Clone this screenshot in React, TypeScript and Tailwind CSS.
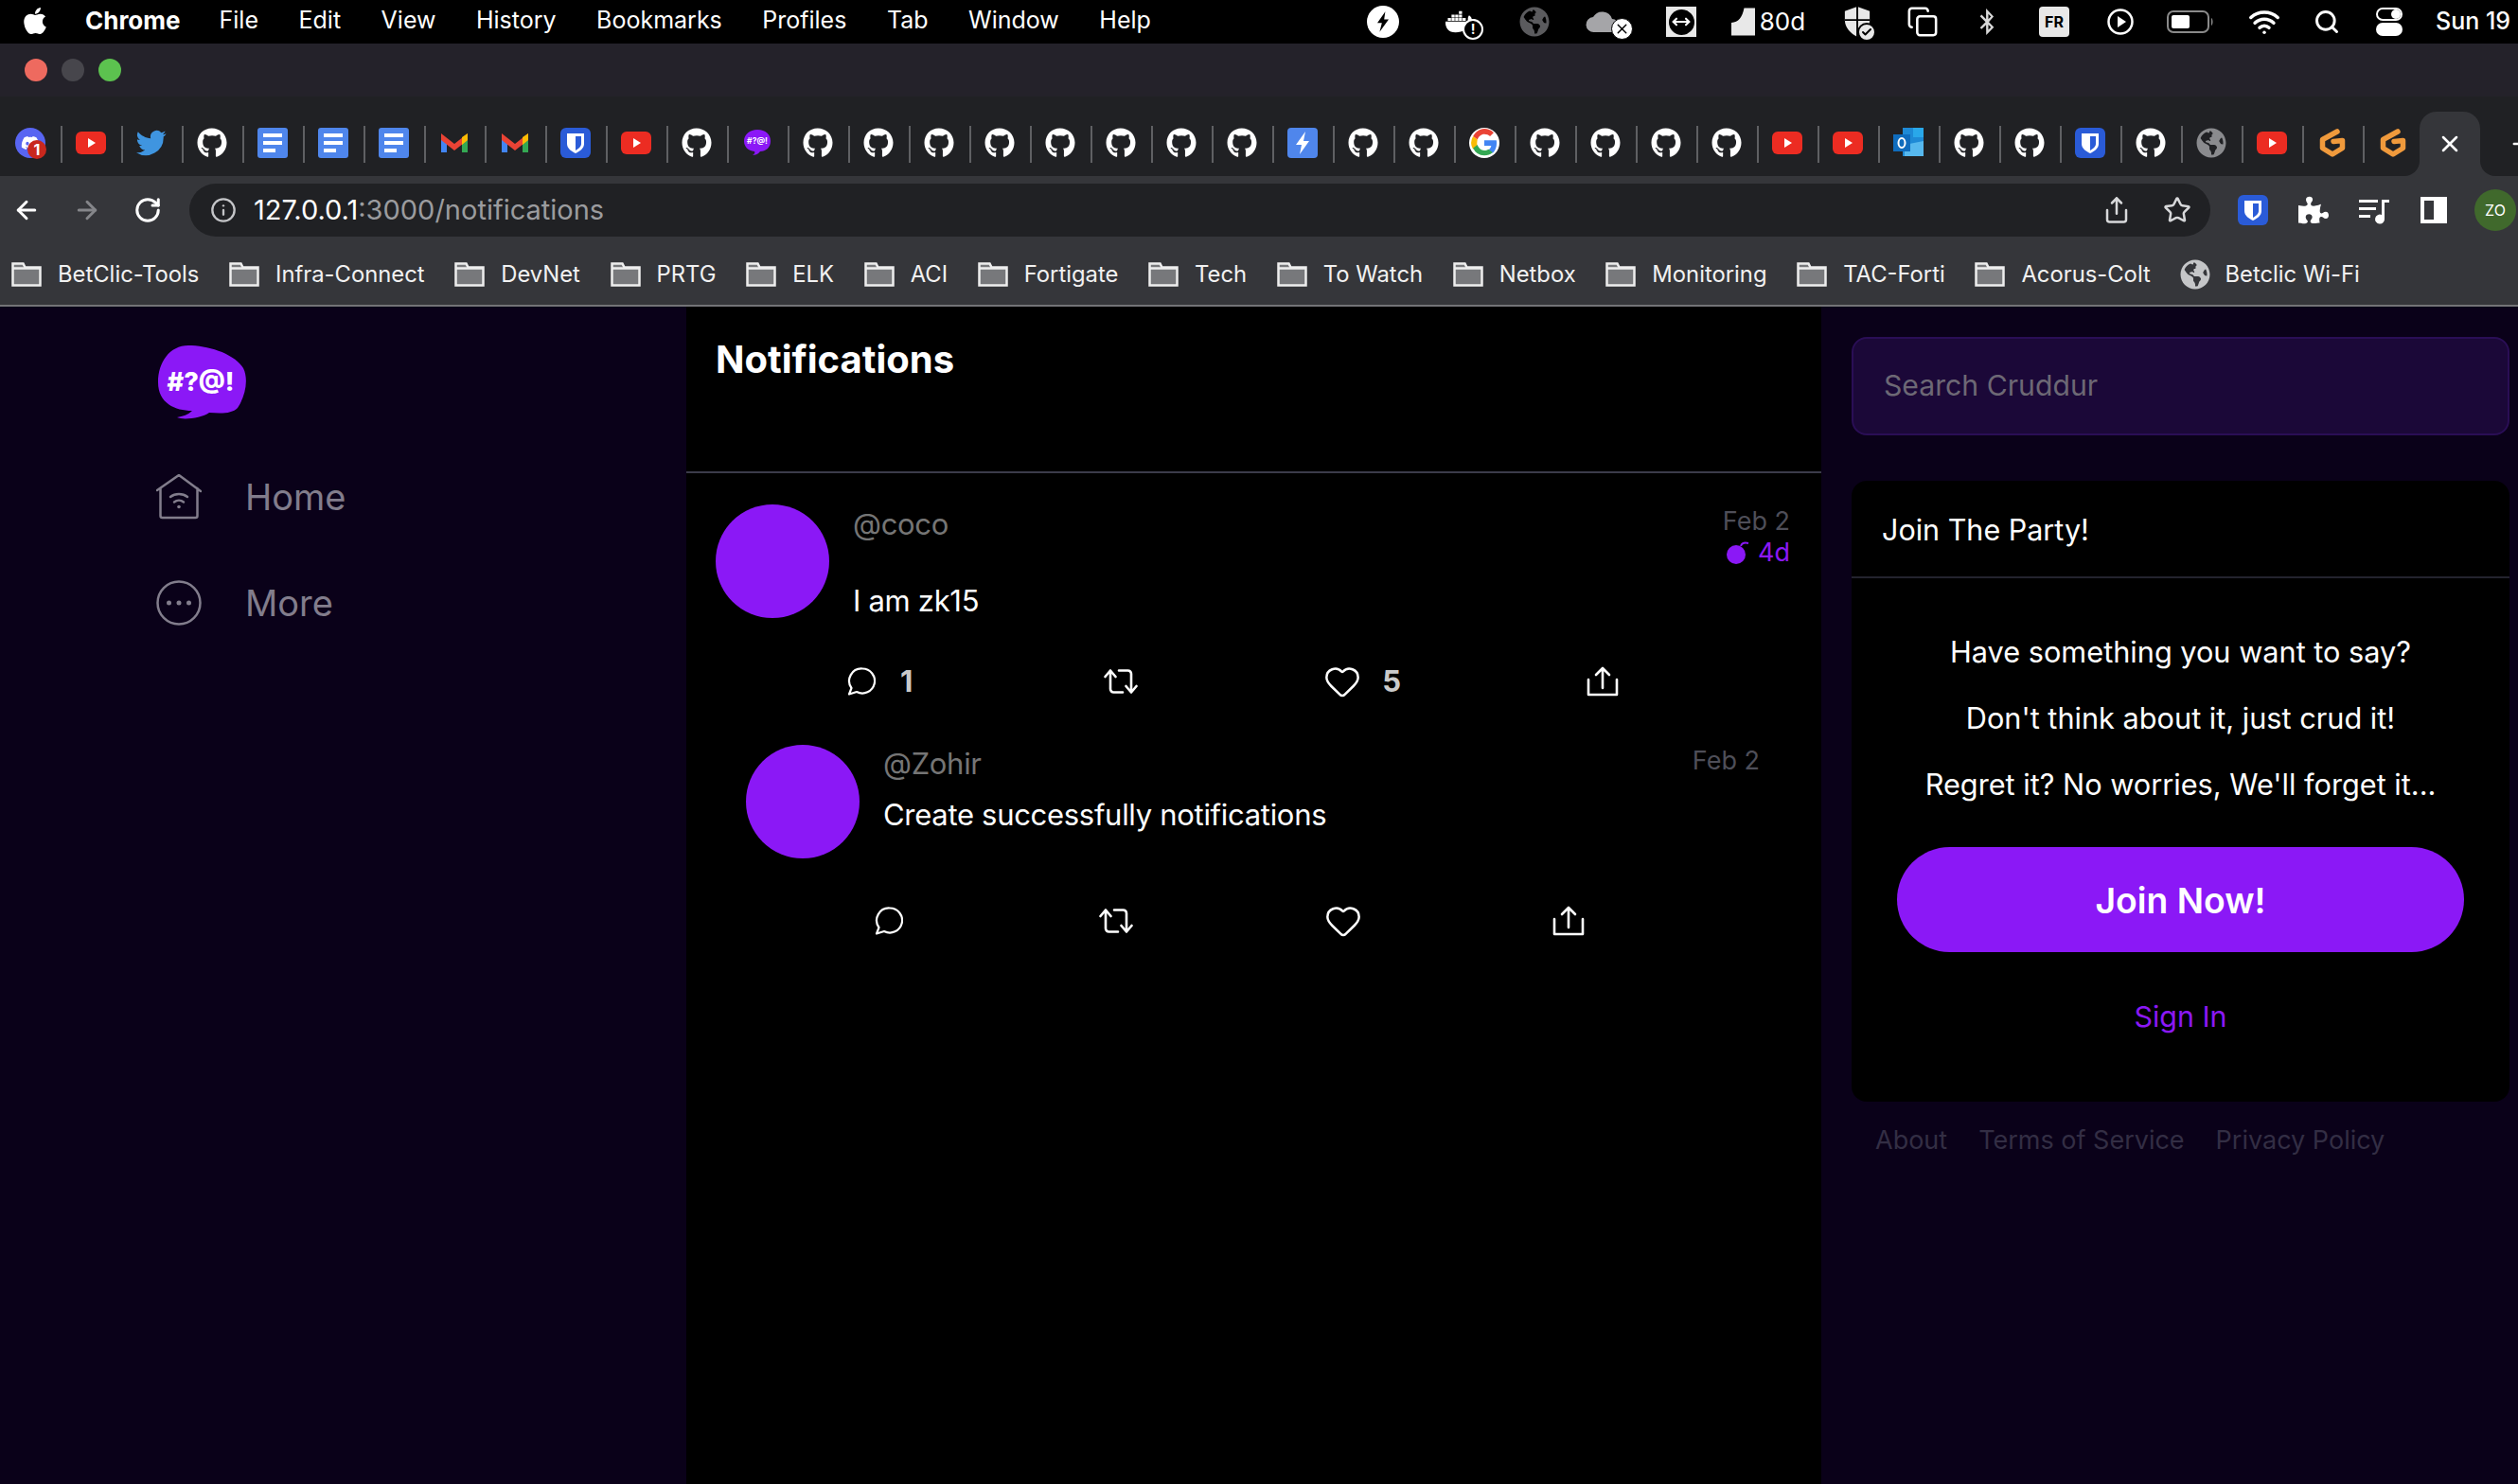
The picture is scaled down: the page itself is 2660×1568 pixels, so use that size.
import { FaApple, FaGithub, FaBluetoothB, FaDiscord, FaDocker, FaGlobeAmericas, FaPuzzlePiece } from 'react-icons/fa';
import { Check, Heart, Info, RotateCw, ArrowLeft, ArrowRight, MoveHorizontal, Search, Share, Star, X, Plus, Wifi, Copy } from 'lucide-react';

type Fav = 'mail' | 'yt' | 'tw' | 'gh' | 'doc' | 'gm' | 'bw' | 'cr' | 'bolt' | 'g' | 'ol' | 'globe' | 'gx';

const tabs: Fav[] = [
  'mail', 'yt', 'tw', 'gh', 'doc', 'doc', 'doc', 'gm', 'gm', 'bw', 'yt', 'gh', 'cr',
  'gh', 'gh', 'gh', 'gh', 'gh', 'gh', 'gh', 'gh', 'bolt', 'gh', 'gh', 'g', 'gh', 'gh', 'gh', 'gh',
  'yt', 'yt', 'ol', 'gh', 'gh', 'bw', 'gh', 'globe', 'yt', 'gx', 'gx',
];

const menus = ['File', 'Edit', 'View', 'History', 'Bookmarks', 'Profiles', 'Tab', 'Window', 'Help'];
const bookmarks = ['BetClic-Tools', 'Infra-Connect', 'DevNet', 'PRTG', 'ELK', 'ACI', 'Fortigate', 'Tech', 'To Watch', 'Netbox', 'Monitoring', 'TAC-Forti', 'Acorus-Colt'];

function Shield() {
  return (
    <svg viewBox="0 0 32 32" className="w-8 h-8 shrink-0">
      <rect x="0" y="0" width="32" height="32" rx="6" fill="#2a5bd7" />
      <path d="M7 6h18v11c0 5-5 8-9 10-4-2-9-5-9-10z" fill="#fff" />
      <path d="M16 9h6v8c0 3-3 5-6 7z" fill="#2a5bd7" />
    </svg>
  );
}

function Favicon({ kind }: { kind: Fav }) {
  switch (kind) {
    case 'gh':
      return <FaGithub className="w-8 h-8 text-white" />;
    case 'yt':
      return (
        <svg viewBox="0 0 32 32" className="w-8 h-8">
          <rect x="0" y="4" width="32" height="24" rx="6" fill="#ec2c22" />
          <path d="M13 11l8 5-8 5z" fill="#fff" />
        </svg>
      );
    case 'tw':
      return (
        <svg viewBox="0 0 24 24" className="w-8 h-8">
          <path fill="#3f95e0" d="M23.6 4.6c-.9.4-1.8.7-2.8.8 1-.6 1.8-1.6 2.1-2.7-.9.6-2 1-3.1 1.2a4.9 4.9 0 0 0-8.4 4.5C7.4 8.2 3.8 6.2 1.4 3.200a4.900 4.900 0 0 0 1.500 6.600c-.8 0-1.500-.2-2.200-.6v.1c0 2.400 1.700 4.400 3.900 4.800-.7.2-1.500.2-2.200.1.6 2 2.400 3.400 4.600 3.400A9.900 9.900 0 0 1 0 19.600 14 14 0 0 0 21.500 7.100c1-.7 1.800-1.500 2.100-2.500z" />
        </svg>
      );
    case 'doc':
      return (
        <svg viewBox="0 0 32 32" className="w-8 h-8">
          <rect width="32" height="32" rx="3" fill="#4f86ec" />
          <rect x="6" y="6" width="20" height="4" fill="#fff" />
          <rect x="6" y="14" width="20" height="4" fill="#fff" />
          <rect x="6" y="22" width="13" height="4" fill="#fff" />
        </svg>
      );
    case 'gm':
      return (
        <svg viewBox="0 0 32 32" className="w-8 h-8">
          <path d="M2 8v18h6V13z" fill="#4285f4" />
          <path d="M30 8v18h-6V13z" fill="#34a853" />
          <path d="M2 6l14 11L30 6v7L16 24 2 13z" fill="#ea4335" />
          <path d="M24 10l6-4v7l-6 5z" fill="#fbbc04" />
        </svg>
      );
    case 'bw':
      return <Shield />;
    case 'cr':
      return (
        <svg viewBox="0 0 32 32" className="w-8 h-8">
          <path d="M16 2c9 0 14 5 14 12s-5 11-11 11c-2 3-6 4-8 4 2-1 3-3 2-4C6 24 2 20 2 14 2 7 8 2 16 2z" fill="#8b18f6" />
          <text x="16" y="17" textAnchor="middle" fontSize="8.500" fontWeight="700" fill="#fff">#?@!</text>
        </svg>
      );
    case 'bolt':
      return (
        <svg viewBox="0 0 32 32" className="w-8 h-8">
          <rect width="32" height="32" rx="4" fill="#4f86ec" />
          <path d="M19 4L9 18h6l-2 10 10-14h-6z" fill="#fff" />
        </svg>
      );
    case 'g':
      return (
        <svg viewBox="0 0 48 48" className="w-8 h-8">
          <path fill="#fff" d="M24 0a24 24 0 1 0 0 48 24 24 0 0 0 0-48z" />
          <path fill="#ea4335" d="M24 10c3.500 0 6.700 1.300 9.100 3.500l5.800-5.800A20 20 0 0 0 6.200 13.600l6.900 5.300C14.800 13.800 19 10 24 10z" />
          <path fill="#4285f4" d="M43.600 24.500c0-1.500-.1-2.900-.4-4.500H24v8.500h11c-.5 2.700-2 5-4.300 6.500l6.600 5.100c3.900-3.600 6.300-9 6.300-15.600z" />
          <path fill="#fbbc05" d="M13.100 28.900A12 12 0 0 1 12.500 24c0-1.700.3-3.400.6-5.100l-6.900-5.300a20 20 0 0 0 0 20.700z" />
          <path fill="#34a853" d="M24 44c5.400 0 9.900-1.800 13.300-4.900L30.700 34c-1.800 1.200-4.100 2-6.700 2-5 0-9.200-3.800-10.900-8.900l-6.900 5.300A20 20 0 0 0 24 44z" />
        </svg>
      );
    case 'ol':
      return (
        <svg viewBox="0 0 32 32" className="w-8 h-8">
          <rect x="10" y="0" width="22" height="30" fill="#1e8ad6" />
          <rect x="21" y="0" width="11" height="10" fill="#29a8ea" />
          <path d="M12 18l20-4v16H12z" fill="#56b8ee" />
          <rect x="0" y="7" width="18" height="18" fill="#0f6cbd" />
          <ellipse cx="9" cy="16" rx="3.500" ry="5" fill="none" stroke="#fff" strokeWidth="2" />
        </svg>
      );
    case 'globe':
      return <FaGlobeAmericas className="w-8 h-8 text-[#8a8b8e]" />;
    case 'gx':
      return (
        <svg viewBox="0 0 32 32" className="w-8 h-8" fill="none" stroke="#f09a3c" strokeWidth="5.500" strokeLinecap="round" strokeLinejoin="round">
          <path d="M21 4L5.500 12.500v9l10.500 6.500 10.500-6.500v-8l-9.500 1" />
        </svg>
      );
    default:
      return (
        <div className="relative w-8 h-8 rounded-full bg-[#5865f2] flex items-center justify-center">
          <FaDiscord className="w-5 h-5 text-white" />
          <span className="absolute -right-[1px] -bottom-[1px] w-5 h-5 rounded-full bg-[#c9281d] text-white text-[16px] leading-5 font-bold text-center">1</span>
        </div>
      );
  }
}

function Folder() {
  return (
    <svg viewBox="0 0 32 26" className="w-[32px] h-[26px] shrink-0">
      <path d="M1.500 24.500V1.500h11l2 4h16v19z" fill="#77787b" stroke="#eee" strokeWidth="2.500" />
      <path d="M1.500 6.500h29" stroke="#eee" strokeWidth="2.500" />
    </svg>
  );
}

function TrayIcons() {
  return (
    <div className="flex items-center text-white w-[1236px] shrink-0">
      <div className="w-[74px] flex justify-center">
        <div className="w-[34px] h-[34px] rounded-full bg-white flex items-center justify-center">
          <svg viewBox="0 0 20 20" className="w-6 h-6"><path d="M12 1L5 11h4l-2 8 8-11h-4z" fill="#000" /></svg>
        </div>
      </div>
      <div className="w-[96px] flex justify-center relative">
        <FaDocker className="w-[32px] h-[32px] -translate-x-[3px]" />
        <span className="absolute left-[47px] bottom-[-3px] w-[22px] h-[22px] rounded-full bg-black border-2 border-white text-[14px] leading-[18px] text-center font-bold">!</span>
      </div>
      <div className="w-[54px] flex justify-center"><FaGlobeAmericas className="w-8 h-8 text-[#5b5b5e]" /></div>
      <div className="w-[98px] flex justify-center relative">
        <svg viewBox="0 0 36 26" className="w-[36px] h-[28px] -translate-x-[4px]"><path d="M9 24a8 8 0 0 1-1-16 11 11 0 0 1 20 2 7 7 0 0 1 0 14z" fill="#a5a5a8" /></svg>
        <span className="absolute right-[21px] bottom-[-5px] w-[23px] h-[23px] rounded-full bg-white border border-black text-black flex items-center justify-center"><X className="w-[17px] h-[17px]" /></span>
      </div>
      <div className="w-[60px] flex justify-center">
        <div className="w-8 h-8 bg-[#e8e8e8] flex items-center justify-center">
          <div className="w-[27px] h-[27px] rounded-full bg-black flex items-center justify-center"><MoveHorizontal className="w-5 h-5 text-white" strokeWidth={2.500} /></div>
        </div>
      </div>
      <div className="w-[124px] flex items-center justify-center gap-[5px]">
        <svg viewBox="0 0 26 30" className="w-[25px] h-[30px]"><path d="M0 16c8 0 12-6 14-16h12v30H0z" fill="#e8e8e8" /></svg>
        <span className="text-[26px] leading-none">80d</span>
      </div>
      <div className="w-[64px] flex justify-center relative">
        <svg viewBox="0 0 32 34" className="w-[30px] h-[34px]"><path d="M16 0l14 5v10c0 9-7 15-14 19C9 30 2 24 2 15V5z" fill="#e8e8e8" /><path d="M16 0v34M2 15h28" stroke="#000" strokeWidth="2" /></svg>
        <span className="absolute left-[32px] bottom-[-4px] w-[20px] h-[20px] rounded-full bg-[#e8e8e8] border-2 border-black flex items-center justify-center"><Check className="w-3 h-3 text-black" strokeWidth={4} /></span>
      </div>
      <div className="w-[74px] flex justify-center"><Copy className="w-[34px] h-[34px]" strokeWidth={1.800} /></div>
      <div className="w-[62px] flex justify-center"><FaBluetoothB className="w-7 h-7 text-[#d8d8d8]" /></div>
      <div className="w-[80px] flex justify-center">
        <span className="w-8 h-8 rounded bg-[#e8e8e8] text-black text-[16px] font-bold leading-8 text-center">FR</span>
      </div>
      <div className="w-[60px] flex justify-center">
        <svg viewBox="0 0 28 28" className="w-7 h-7"><circle cx="14" cy="14" r="12.500" fill="none" stroke="#fff" strokeWidth="2.500" /><path d="M11 8l9 6-9 6z" fill="#fff" /></svg>
      </div>
      <div className="w-[88px] flex justify-center">
        <svg viewBox="0 0 50 24" className="w-[50px] h-[24px]"><rect x="1" y="1" width="43" height="22" rx="6" fill="none" stroke="#8a8a8a" strokeWidth="2" /><rect x="5" y="5" width="19" height="14" rx="2" fill="#fff" /><path d="M47 8c2 1 2 7 0 8z" fill="#8a8a8a" /></svg>
      </div>
      <div className="w-[68px] flex justify-center"><Wifi className="w-[34px] h-[34px]" strokeWidth={2.500} /></div>
      <div className="w-[64px] flex justify-center"><Search className="w-[28px] h-[28px]" strokeWidth={2.500} /></div>
      <div className="w-[68px] flex justify-center">
        <div className="flex flex-col gap-0.5">
          <div className="w-7 h-[14px] rounded-full border-2 border-white flex justify-end"><span className="w-[10px] h-[10px] rounded-full bg-white" /></div>
          <div className="w-7 h-[14px] rounded-full bg-white" />
        </div>
      </div>
      <span className="text-[25px] font-medium whitespace-nowrap ml-[15px]">Sun 19</span>
    </div>
  );
}

function Chrome() {
  return (
    <header className="font-['Inter',sans-serif]">
      {/* mac menu bar */}
      <div className="h-[46px] bg-black text-white flex items-center justify-between overflow-hidden">
        <div className="flex items-center pl-[22px] pb-[3px]">
          <FaApple className="w-[30px] h-[32px] mr-[38px]" />
          <span className="text-[26px] font-bold mr-[41px]">Chrome</span>
          <div className="flex items-center gap-[42.500px] text-[25px]">
            {menus.map((m) => (
              <span key={m}>{m}</span>
            ))}
          </div>
        </div>
        <TrayIcons />
      </div>

      {/* window title bar */}
      <div className="h-[56px] bg-[#24222a] flex items-center gap-[15px] pl-[26px]">
        <span className="w-6 h-6 rounded-full bg-[#ee6a5f]" />
        <span className="w-6 h-6 rounded-full bg-[#47464c]" />
        <span className="w-6 h-6 rounded-full bg-[#5cc24f]" />
      </div>

      {/* tabs */}
      <div className="h-[84px] bg-[#202124] flex items-end">
        {tabs.map((t, i) => (
          <div key={i} className="w-[64px] h-[68px] flex items-center justify-center relative shrink-0 pb-[2px]">
            <Favicon kind={t} />
            <span className="absolute right-[-2px] top-[15px] h-[39px] w-[2px] bg-[#5f6063]" />
          </div>
        ))}
        <div className="relative w-[64px] h-[68px] ml-[-4px] bg-[#35363a] rounded-t-[18px] flex items-center justify-center shrink-0">
          <X className="w-7 h-7 text-white" strokeWidth={2.200} />
          <span className="absolute -left-4 bottom-0 w-4 h-4 bg-[#35363a]"><span className="block w-4 h-4 bg-[#202124] rounded-br-2xl" /></span>
          <span className="absolute -right-4 bottom-0 w-4 h-4 bg-[#35363a]"><span className="block w-4 h-4 bg-[#202124] rounded-bl-2xl" /></span>
        </div>
        <div className="h-[68px] flex items-center pl-[30px]"><Plus className="w-7 h-7 text-white" strokeWidth={2.200} /></div>
      </div>

      {/* address bar */}
      <div className="h-[72px] bg-[#35363a] flex items-center">
        <div className="w-[200px] flex items-center text-white shrink-0 pl-[13px] gap-[34px]">
          <ArrowLeft className="w-[30px] h-[30px]" strokeWidth={2.400} />
          <ArrowRight className="w-[30px] h-[30px] text-[#85868a]" strokeWidth={2.400} />
          <RotateCw className="w-[30px] h-[30px]" strokeWidth={2.400} />
        </div>
        <div className="w-[2135px] h-[56px] rounded-full bg-[#202124] flex items-center pl-[22px] pr-[20px] shrink-0">
          <Info className="w-7 h-7 text-[#c4c5c8]" strokeWidth={2} />
          <span className="ml-[18px] text-[29px] text-white">127.0.0.1<span className="text-[#9b9c9f]">:3000/notifications</span></span>
          <div className="ml-auto flex items-center gap-[34px] text-[#d8d9db]">
            <Share className="w-[30px] h-[30px]" strokeWidth={2} />
            <Star className="w-[30px] h-[30px]" strokeWidth={2} />
          </div>
        </div>
        <div className="flex items-center flex-1 pl-[29px] gap-[32px] text-white">
          <Shield />
          <FaPuzzlePiece className="w-[32px] h-[32px] shrink-0" />
          <svg viewBox="0 0 32 32" className="w-8 h-8 shrink-0" fill="#fff">
            <rect x="0" y="5" width="20" height="3" /><rect x="0" y="13" width="18" height="3" /><rect x="0" y="21" width="12" height="3" />
            <path d="M24 5h8v3h-5v17a5 5 0 1 1-3-4z" />
          </svg>
          <svg viewBox="0 0 28 28" className="w-7 h-7 shrink-0 ml-[1px]"><rect width="28" height="28" fill="#fff" /><rect x="4" y="4" width="10" height="20" fill="#35363a" /></svg>
          <span className="w-[44px] h-[44px] -ml-[3px] rounded-full bg-[#40692c] text-white text-[16px] leading-[44px] text-center shrink-0">ZO</span>
        </div>
      </div>

      {/* bookmarks */}
      <div className="h-[66px] bg-[#35363a] border-b-2 border-[#737477] flex items-center pl-[12px] text-[23.800px] text-[#f1f1f1] whitespace-nowrap">
        {bookmarks.map((b) => (
          <div key={b} className="flex items-center gap-[17px] mr-[31.700px]">
            <Folder />
            <span>{b}</span>
          </div>
        ))}
        <div className="flex items-center gap-[15px]">
          <FaGlobeAmericas className="w-[32px] h-[32px] text-[#c5c6c8]" />
          <span>Betclic Wi-Fi</span>
        </div>
      </div>
    </header>
  );
}

function Logo() {
  return (
    <svg viewBox="0 0 96 78" className="w-[96px] h-[78px]">
      <path d="M34 0c20 0 48 8 58 24 6 12 2 30-6 42-6 6-16 6-30 5-8 6-28 8-34 5 6-1 12-3 16-7-18 0-36-8-36-30C2 18 14 0 34 0z" fill="#8b18f6" />
      <text x="47" y="48" textAnchor="middle" fontSize="27" fontWeight="800" fill="#fff" fontFamily="Inter, sans-serif">#?@!</text>
    </svg>
  );
}

function HomeIcon() {
  return (
    <svg viewBox="0 0 48 48" className="w-12 h-12 shrink-0" fill="none" stroke="#827d8c" strokeWidth="2.500" strokeLinecap="round" strokeLinejoin="round">
      <path d="M1 17L24 1l23 17M4.500 15v29a2 2 0 0 0 2 2h35a2 2 0 0 0 2-2V15" />
      <path d="M15 24c5-4 13-4 18 0M19 29.500c3-2.500 7-2.500 10 0" />
      <circle cx="24" cy="34.500" r="1.800" fill="#827d8c" stroke="none" />
    </svg>
  );
}

function MoreIcon() {
  return (
    <svg viewBox="0 0 48 48" className="w-12 h-12 shrink-0" fill="none" stroke="#827d8c" strokeWidth="2.500">
      <circle cx="24" cy="24" r="22.500" />
      <circle cx="13.500" cy="24" r="2.500" fill="#827d8c" stroke="none" />
      <circle cx="24" cy="24" r="2.500" fill="#827d8c" stroke="none" />
      <circle cx="34.500" cy="24" r="2.500" fill="#827d8c" stroke="none" />
    </svg>
  );
}

function Sidebar() {
  return (
    <nav className="bg-[#0a0119] pl-[165px] pt-[41px] text-[#827d8c]">
      <Logo />
      <div className="flex items-center gap-[46px] mt-[58px] h-[48px]">
        <HomeIcon />
        <span className="text-[38px]">Home</span>
      </div>
      <div className="flex items-center gap-[46px] mt-[64px] h-[48px]">
        <MoreIcon />
        <span className="text-[38px]">More</span>
      </div>
    </nav>
  );
}

function ReplyIcon() {
  return (
    <svg viewBox="0 0 30 30" className="w-[30px] h-[30px] shrink-0" fill="none" stroke="#fff" strokeWidth="2.200" strokeLinejoin="round">
      <path d="M16 1.500a13 13 0 1 1-6 24.500L2 28.500l2.500-6.500A13 13 0 0 1 16 1.500z" />
    </svg>
  );
}

function RetweetIcon() {
  return (
    <svg viewBox="0 0 36 28" className="w-9 h-7 shrink-0 ml-[6px]" fill="none" stroke="#fff" strokeWidth="2.600" strokeLinecap="round" strokeLinejoin="round">
      <path d="M1.500 9L7 2.500 12.500 9M7 3v19a3.500 3.500 0 0 0 3.500 3.500H20" />
      <path d="M34.500 19L29 25.500 23.500 19M29 25V6a3.500 3.500 0 0 0-3.500-3.500H16" />
    </svg>
  );
}

function ShareIcon() {
  return (
    <svg viewBox="0 0 34 32" className="w-[34px] h-8 shrink-0" fill="none" stroke="#fff" strokeWidth="2.600" strokeLinecap="round" strokeLinejoin="round">
      <path d="M2 14v16h30V14M17 23V2M10 9l7-7 7 7" />
    </svg>
  );
}

function BombIcon() {
  return (
    <svg viewBox="0 0 26 26" className="w-[26px] h-[26px] shrink-0" fill="#8b18f6">
      <circle cx="11" cy="15" r="10" />
      <path d="M16 6c1-3 4-4 8-3" fill="none" stroke="#8b18f6" strokeWidth="2" />
    </svg>
  );
}

function ActionBar({ replies, likes, className }: { replies?: number; likes?: number; className: string }) {
  return (
    <div className={`flex justify-around items-center text-white ${className}`}>
      <div className="flex items-center gap-[26px]">
        <ReplyIcon />
        {replies ? <span className="text-[31px] font-bold text-[#cacaca]">{replies}</span> : null}
      </div>
      <RetweetIcon />
      <div className="flex items-center gap-[22px]">
        <Heart className="w-[40px] h-[40px]" strokeWidth={1.500} />
        {likes ? <span className="text-[31px] font-bold text-[#cacaca]">{likes}</span> : null}
      </div>
      <ShareIcon />
    </div>
  );
}

function Activity() {
  return (
    <main className="bg-black">
      <div className="h-[176px] border-b-2 border-[#3b3b4a] pl-[31px] pt-[30px]">
        <h1 className="text-[40px] leading-[52px] font-bold text-white">Notifications</h1>
      </div>

      {/* first item */}
      <section className="px-[33px] pt-[33px]">
        <div className="flex">
          <div className="w-[120px] h-[120px] rounded-full bg-[#8b18f6] shrink-0 -ml-[2px]" />
          <div className="ml-[25px] flex-1">
            <div className="flex justify-between">
              <span className="text-[31px] tracking-[-0.3px] leading-[44px] text-[#757575] -mt-[1px]">@coco</span>
              <div className="text-right text-[27px] leading-[33px] text-[#4e4e58] mt-[1px]">
                <div>Feb 2</div>
                <div className="flex items-center justify-end gap-[8px] text-[#8b18f6]">
                  <BombIcon />
                  4d
                </div>
              </div>
            </div>
            <p className="text-[31px] tracking-[-0.3px] leading-[44px] text-white mt-[13px]">I am zk15</p>
          </div>
        </div>
      </section>
      <ActionBar replies={1} likes={5} className="ml-[72px] mr-[116px] h-[48px] mt-[39px]" />

      {/* second item */}
      <section className="px-[32px] pt-[43px] ml-[31px] mr-[33px]">
        <div className="flex">
          <div className="w-[120px] h-[120px] rounded-full bg-[#8b18f6] shrink-0" />
          <div className="ml-[25px] flex-1">
            <div className="flex justify-between">
              <span className="text-[31px] tracking-[-0.3px] leading-[44px] text-[#757575] mt-[-2px]">@Zohir</span>
              <span className="text-[27px] leading-[33px] text-[#4e4e58]">Feb 2</span>
            </div>
            <p className="text-[31px] tracking-[-0.3px] leading-[44px] text-white mt-[10px]">Create successfully notifications</p>
          </div>
        </div>
      </section>
      <ActionBar className="ml-[98px] mr-[149px] h-[48px] mt-[42px]" />
    </main>
  );
}

function RightPane() {
  return (
    <aside className="bg-[#0a0119] pl-[32px] pr-[9px] pt-[32px]">
      <div className="h-[104px] rounded-2xl bg-[#1b0838] border-2 border-[#2a0e55] pl-[32px] flex items-center text-[30.200px] text-[#6d6875]">Search Cruddur</div>

      <div className="mt-[48px] rounded-2xl bg-black text-white h-[656px] flex flex-col">
        <div className="h-[103px] border-b-2 border-[#23232e] pl-[32px] pt-[3px] flex items-center text-[30.500px]">Join The Party!</div>
        <div className="flex flex-col items-center text-[30.700px] leading-[70px] pt-[43px]">
          <p>Have something you want to say?</p>
          <p>Don't think about it, just crud it!</p>
          <p>Regret it? No worries, We'll forget it...</p>
        </div>
        <button className="mx-[48px] mt-[31px] h-[111px] pt-[2px] rounded-full bg-[#8b18f6] text-[37.300px] font-semibold text-white shrink-0">Join Now!</button>
        <div className="text-center text-[30.400px] text-[#8b18f6] mt-[46px]">Sign In</div>
      </div>

      <div className="flex gap-[33px] pl-[25px] mt-[21px] text-[27px] text-[#332e44]">
        <span>About</span>
        <span>Terms of Service</span>
        <span>Privacy Policy</span>
      </div>
    </aside>
  );
}

export default function App() {
  return (
    <div className="w-[2660px] h-[1568px] flex flex-col overflow-hidden bg-black font-['Inter',sans-serif]">
      <Chrome />
      <div className="flex-1 grid grid-cols-[725px_1199px_736px] min-h-0">
        <Sidebar />
        <Activity />
        <RightPane />
      </div>
    </div>
  );
}
